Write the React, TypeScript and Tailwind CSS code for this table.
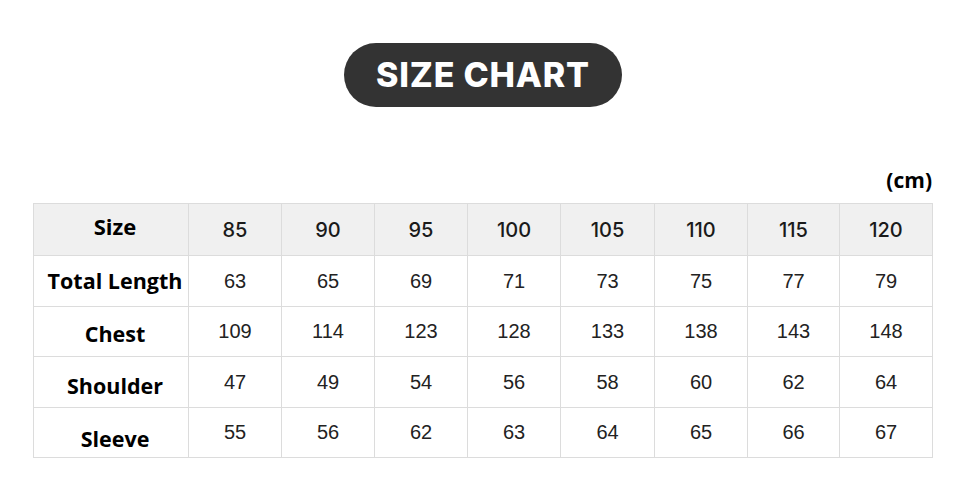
import React from "react";

const sizes = ["85", "90", "95", "100", "105", "110", "115", "120"];
const rows: { label: string; values: string[]; shift: string }[] = [
  { label: "Total Length", values: ["63", "65", "69", "71", "73", "75", "77", "79"], shift: "pt-0" },
  { label: "Chest", values: ["109", "114", "123", "128", "133", "138", "143", "148"], shift: "pt-[5px]" },
  { label: "Shoulder", values: ["47", "49", "54", "56", "58", "60", "62", "64"], shift: "pt-[8px]" },
  { label: "Sleeve", values: ["55", "56", "62", "63", "64", "65", "66", "67"], shift: "pt-[14px]" },
];

export default function App() {
  return (
    <div className="w-[976px] h-[477px] bg-white relative overflow-hidden">
      <div className="pt-[43px] pl-[344px]">
        <div className="w-[278px] h-[64px] rounded-full bg-[#333333] flex items-center justify-center">
          <span
            className="text-white text-[34px] font-extrabold tracking-[0.8px] leading-none"
            style={{ fontFamily: "Inter, 'Liberation Sans', sans-serif" }}
          >
            SIZE CHART
          </span>
        </div>
      </div>
      <div className="pl-[33px] pr-[44px] mt-[63px]">
        <div
          className="flex justify-end text-[21px] font-bold leading-none text-black h-[33px]"
          style={{ fontFamily: "'Open Sans', 'Noto Sans', sans-serif" }}
        >
          (cm)
        </div>
        <table className="border-collapse table-fixed w-[900px]">
          <colgroup>
            <col className="w-[155px]" />
            <col className="w-[93px]" />
            <col className="w-[93px]" />
            <col className="w-[93px]" />
            <col className="w-[93px]" />
            <col className="w-[94px]" />
            <col className="w-[93px]" />
            <col className="w-[92px]" />
            <col className="w-[93px]" />
          </colgroup>
          <tbody>
            <tr className="bg-[#f0f0f0] h-[52px]">
              <td
                className="border border-[#dcdcdc] text-center text-[22px] font-bold text-black pb-[6px] pl-[8px]"
                style={{ fontFamily: "'Open Sans', 'Noto Sans', sans-serif" }}
              >
                Size
              </td>
              {sizes.map((s) => (
                <td
                  key={s}
                  className="border border-[#dcdcdc] text-center text-[20px] font-medium text-[#1a1a1a]"
                  style={{ fontFamily: "Inter, 'Liberation Sans', sans-serif" }}
                >
                  {s}
                </td>
              ))}
            </tr>
            {rows.map((r) => (
              <tr key={r.label} className="h-[50.5px]">
                <td
                  className={`border border-[#dcdcdc] text-center text-[21.5px] font-bold text-black pl-[8px] ${r.shift}`}
                  style={{ fontFamily: "'Open Sans', 'Noto Sans', sans-serif" }}
                >
                  {r.label}
                </td>
                {r.values.map((v, i) => (
                  <td
                    key={i}
                    className="border border-[#dcdcdc] text-center text-[20px] text-[#222222]"
                    style={{ fontFamily: "'Liberation Sans', Arial, sans-serif" }}
                  >
                    {v}
                  </td>
                ))}
              </tr>
            ))}
          </tbody>
        </table>
      </div>
    </div>
  );
}
